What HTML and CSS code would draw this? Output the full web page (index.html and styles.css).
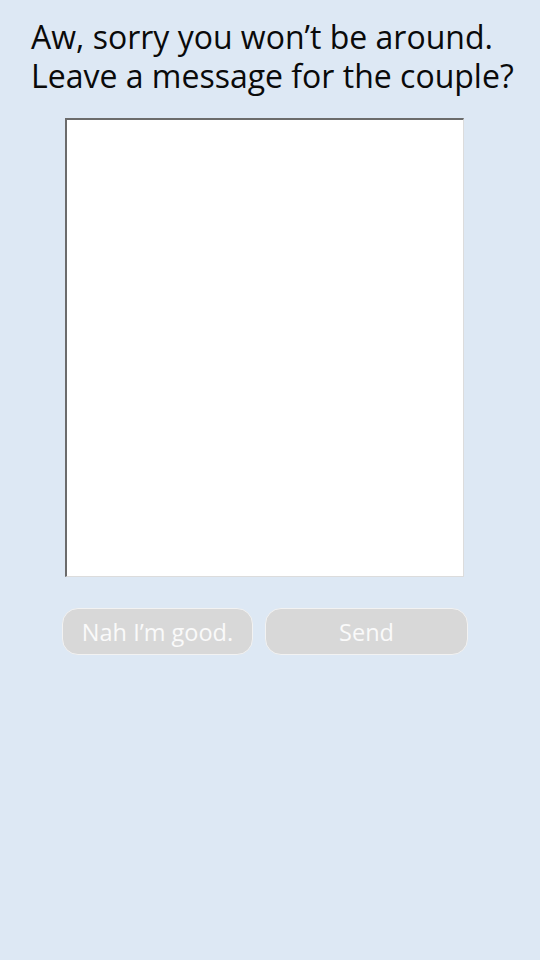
FILE: index.html
```html
<!DOCTYPE html>
<html>
<head>
<meta charset="utf-8">
<link rel="stylesheet" href="styles.css">
</head>
<body>
<main class="page">
  <h1 class="title">Aw, sorry you won’t be around.<br>Leave a message for the couple?</h1>
  <textarea class="message"></textarea>
  <div class="actions">
    <button class="btn btn-nah">Nah I’m good.</button>
    <button class="btn btn-send">Send</button>
  </div>
</main>
</body>
</html>
```
FILE: styles.css
```css
html, body {
  margin: 0;
  padding: 0;
  background: #dde8f4;
  height: 100%;
}
.page {
  font-family: "Open Sans", sans-serif;
  padding: 17px 0 0 31px;
}
.title {
  margin: 0;
  font-weight: 400;
  font-size: 32px;
  line-height: 39px;
  color: #0a0a0a;
}
.message {
  display: block;
  box-sizing: border-box;
  margin: 23px 0 0 34px;
  width: 399px;
  height: 459px;
  background: #fff;
  border-style: solid;
  border-width: 2px 1px 1px 2px;
  border-color: #6b6b6b #dcdcdc #dcdcdc #6b6b6b;
  resize: none;
  padding: 0;
  outline: none;
}
.actions {
  display: flex;
  gap: 12px;
  margin: 31px 0 0 31px;
}
.btn {
  box-sizing: border-box;
  height: 47px;
  border-radius: 16px;
  background: #d8d8d8;
  border: 1px solid #f2f2f2;
  color: #fafafa;
  font-family: "Open Sans", sans-serif;
  font-size: 23.5px;
  padding: 0;
}
.btn-nah { width: 191px; }
.btn-send { width: 203px; }
```
